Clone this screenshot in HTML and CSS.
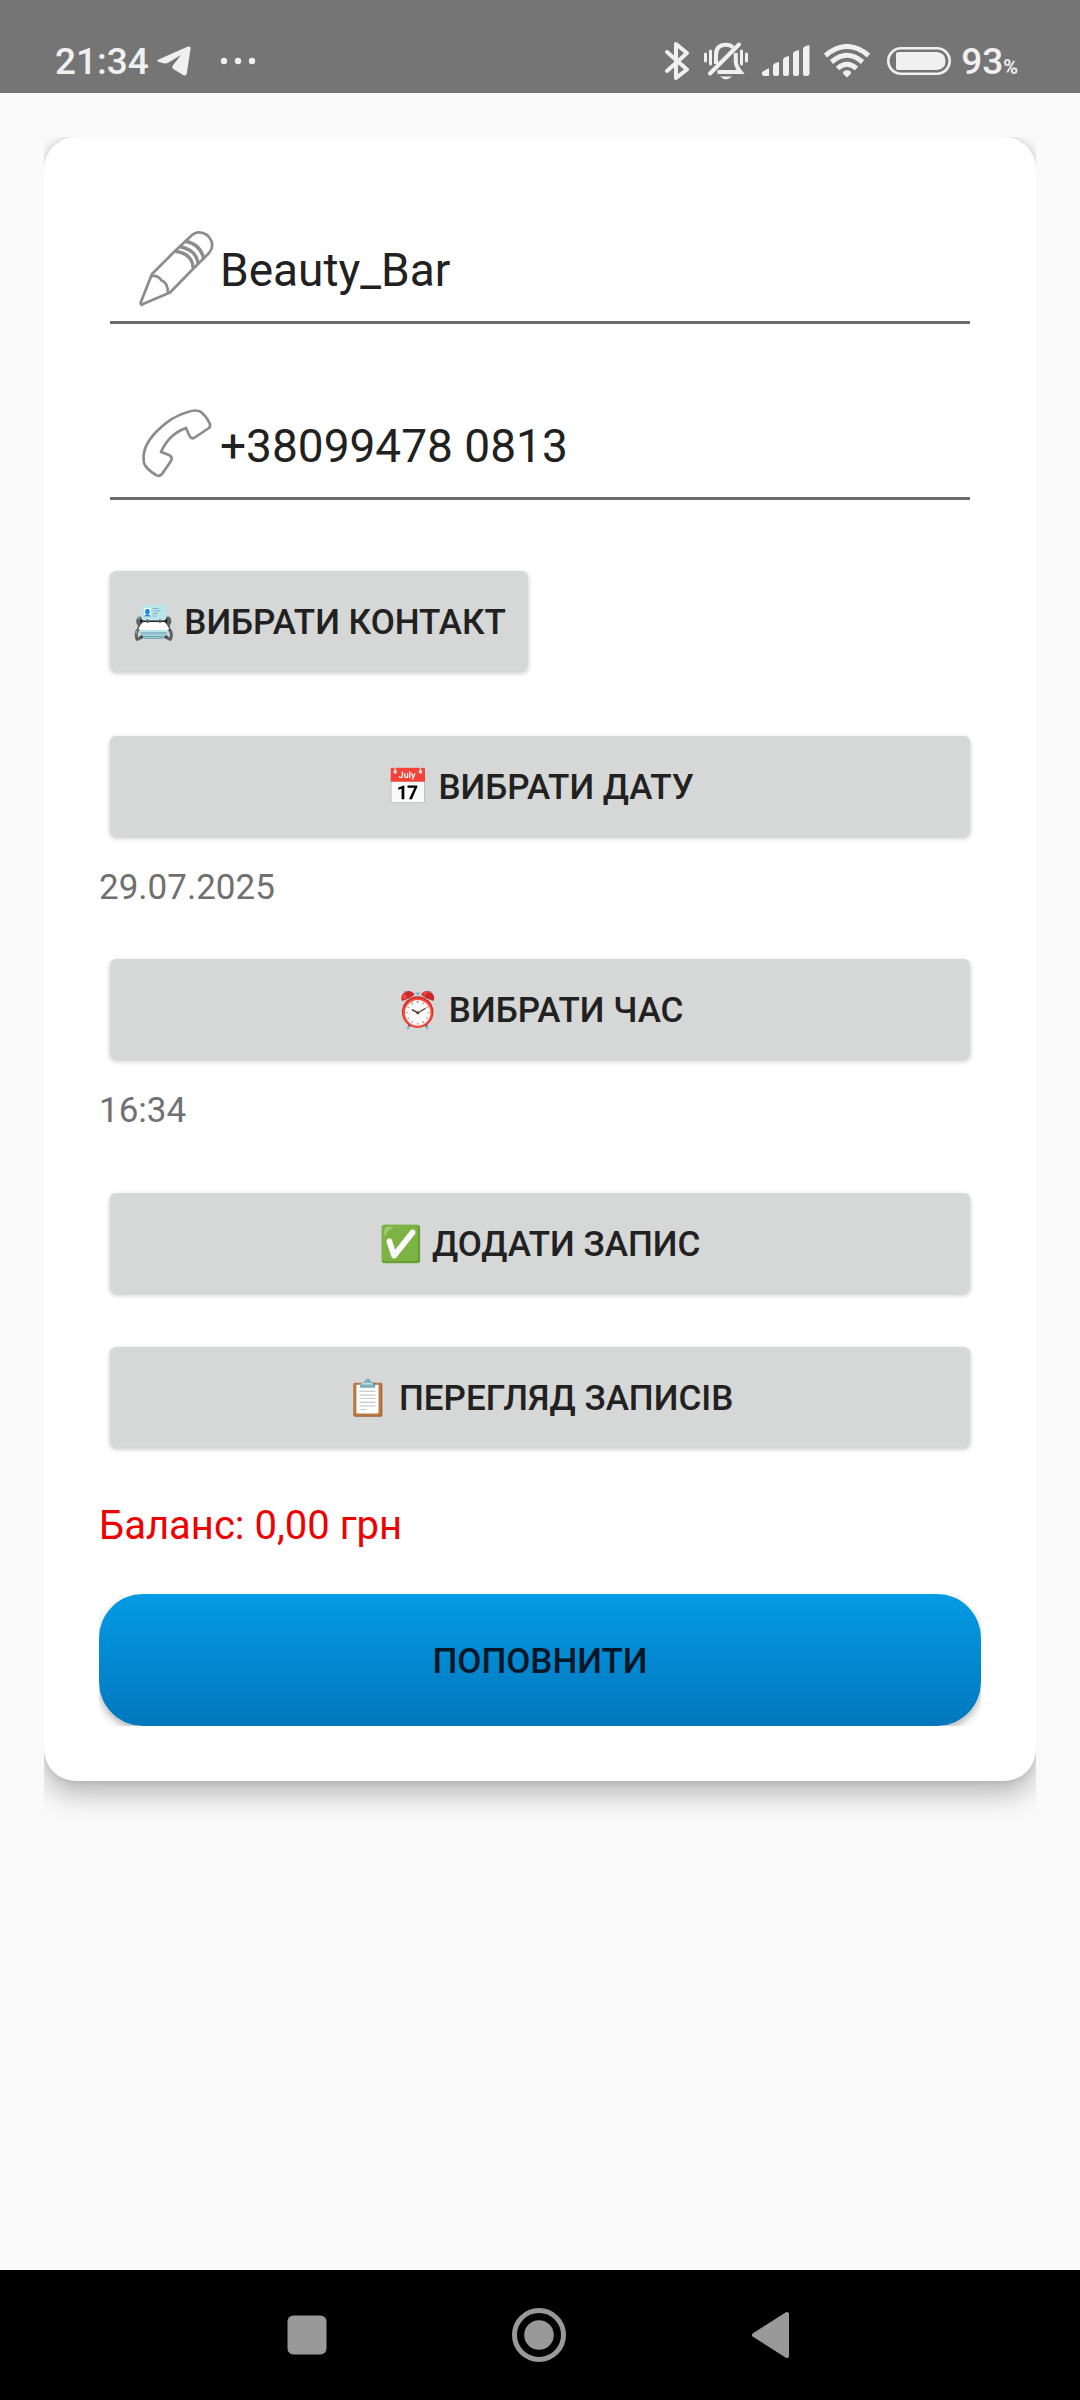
FILE: index.html
```html
<!DOCTYPE html>
<html lang="uk">
<head>
<meta charset="utf-8">
<meta name="viewport" content="width=device-width, initial-scale=1">
<title>Beauty_Bar</title>
<link rel="stylesheet" href="styles.css">
</head>
<body>
<header class="status">
  <div class="status-left">
    <span class="clock">21:34</span>
    <svg class="telegram" width="34" height="30" viewBox="0 0 34 30" aria-hidden="true"><path fill="#f0f0f0" d="M1.500 13.500 L31 .6 Q34 -.3 33.600 2.500 L29.800 27.500 Q29 30.500 26.200 29 L17 23.500 Q14 21.500 16.200 19 L24 9 L11.500 16.500 Q9 18 5.500 17 L1.500 15.700 Q-.8 14.700 1.500 13.500 Z"/></svg>
    <svg width="36" height="8" viewBox="0 0 36 8" fill="#f0f0f0" aria-hidden="true"><circle cx="4" cy="4" r="3.200"/><circle cx="18" cy="4" r="3.200"/><circle cx="32" cy="4" r="3.200"/></svg>
  </div>
  <div class="status-right">
    <svg width="26" height="40" viewBox="0 0 26 40" fill="none" stroke="#f0f0f0" stroke-width="4" stroke-linecap="round" stroke-linejoin="round" aria-hidden="true"><path d="M3 11 L23 28.500 L12 37 V3 L23 12 L3 30"/></svg>
    <svg width="44" height="40" viewBox="0 0 44 40" fill="none" stroke="#f0f0f0" stroke-width="4" aria-hidden="true"><path d="M6 32.500 L35 3.500" stroke-linecap="round"/><path d="M12 23 V14 Q12 3.800 22 3.800 Q26.500 3.800 29 6.500"/><path d="M31.800 12 V21 Q31.800 25 36.500 31 H13.500"/><path d="M1.500 13 V20 M6.500 10 V23 M37.500 10 V23 M42.500 13 V20" stroke-width="3" stroke-linecap="round"/><path d="M16 35.500 H28 Q22 41 16 35.500 Z" fill="#f0f0f0" stroke="none"/></svg>
    <svg width="48" height="32" viewBox="0 0 48 32" fill="#f0f0f0" aria-hidden="true"><path d="M0 27 L7 23 V31 H2 Q0 31 0 29 Z M11 21 Q11 18 17 17 V29 Q17 31 15 31 H13 Q11 31 11 29 Z M21 15 Q21 12 27 11 V29 Q27 31 25 31 H23 Q21 31 21 29 Z M31 9 Q31 6 37 5 V29 Q37 31 35 31 H33 Q31 31 31 29 Z M41 4 Q41 1 47.500 0 V29 Q47 31 45 31 H43 Q41 31 41 29 Z"/></svg>
    <svg width="46" height="34" viewBox="0 0 46 34" fill="none" stroke="#f0f0f0" stroke-width="5" aria-hidden="true"><path d="M1.500 11.500 Q23 -6.500 44.500 11.500"/><path d="M7.500 18 Q23 4.500 38.500 18"/><path d="M13.500 24.500 Q23 16 32.500 24.500"/><path d="M19 29.500 Q18.500 26.500 23 26.200 Q27.500 26.500 27 29.500 L23 33.500 Z" fill="#f0f0f0" stroke="none"/></svg>
    <svg class="battery" width="64" height="28" viewBox="0 0 64 28" aria-hidden="true"><rect x="1.300" y="1.300" width="61.400" height="25.400" rx="12.700" fill="none" stroke="#f0f0f0" stroke-width="2.600"/><path d="M11 5 H50 Q58.500 6 58.500 14 Q58.500 22 50 23 H11 Q9 23 9 21 V7 Q9 5 11 5 Z" fill="#f0f0f0"/></svg>
    <span class="charge">93<small class="percent">%</small></span>
  </div>
</header>

<main class="stage">
  <form class="card">
    <label class="field">
      <svg width="96" height="96" viewBox="0 0 96 96" fill="none" stroke="#8c8c8c" stroke-width="2.700" stroke-linejoin="round" stroke-linecap="round" role="img" aria-label="Ім'я"><path d="M13 82 Q11 84 10.500 81 L22 52 L45.500 28.500 L60 15 Q67.500 7 77 13 L79 15 Q85.500 23 79 31 L63 47 L40 70.500 Z"/><path d="M22 54 Q28 53 31.500 58.500 Q37.500 60 38 71"/><path stroke-width="3.400" d="M46.500 29.500 Q62 32 63 45 M51 25 Q66 28 68 41 M56 19.500 Q70 22 73.500 36"/></svg>
      <input class="input" type="text" value="Beauty_Bar">
    </label>
    <label class="field">
      <svg width="96" height="96" viewBox="0 0 96 96" fill="none" stroke="#8c8c8c" stroke-width="2.700" stroke-linejoin="round" role="img" aria-label="Телефон"><path d="M58 14 Q66 11 71 14 Q76 18 79.500 25 Q81 28 79 30 L64 40 Q61 41 59.500 38 L56 30 Q39 36 31 54 L39 57 Q43 59 41 63 L32 76 Q29 79 26 77 Q16 71 14 65 Q11 49 27 33 Q42 18 58 14 Z"/></svg>
      <input class="input" type="tel" value="+38099478 0813">
    </label>
    <button class="btn btn-contact" type="button">📇 ВИБРАТИ КОНТАКТ</button>
    <button class="btn" type="button">📅 ВИБРАТИ ДАТУ</button>
    <p class="value">29.07.2025</p>
    <button class="btn" type="button">⏰ ВИБРАТИ ЧАС</button>
    <p class="value value-last">16:34</p>
    <button class="btn btn-add" type="submit">✅ ДОДАТИ ЗАПИС</button>
    <button class="btn" type="button">📋 ПЕРЕГЛЯД ЗАПИСІВ</button>
    <p class="balance">Баланс: 0,00 грн</p>
    <div class="topup-clip"><button class="topup" type="button">ПОПОВНИТИ</button></div>
  </form>
</main>

<nav class="navbar">
  <button class="nav-btn" type="button" aria-label="Recent"><svg width="56" height="56" viewBox="0 0 56 56" fill="#999"><rect x="8.500" y="8.500" width="39" height="39" rx="6"/></svg></button>
  <button class="nav-btn" type="button" aria-label="Home"><svg width="56" height="56" viewBox="0 0 56 56"><circle cx="28" cy="28" r="24.500" fill="none" stroke="#999" stroke-width="5"/><circle cx="28" cy="28" r="14.800" fill="#999"/></svg></button>
  <button class="nav-btn" type="button" aria-label="Back"><svg width="56" height="56" viewBox="0 0 56 56" fill="#999" stroke="#999" stroke-width="4" stroke-linejoin="round"><path d="M11 28 L44 7 V49 Z"/></svg></button>
</nav>
</body>
</html>
```
FILE: styles.css
```css
* { box-sizing: border-box; }
body {
  margin: 0;
  min-height: 100vh;
  display: flex;
  flex-direction: column;
  background: #fafafa;
  color: #212121;
  font-family: Roboto, "Noto Color Emoji", sans-serif;
}
button, input { font: inherit; color: inherit; border: 0; }
p { margin: 0; }
svg { display: block; flex: none; }

.status {
  display: flex;
  justify-content: space-between;
  height: 93px;
  padding: 28px 62px 0 55px;
  background: #757575;
  color: #f0f0f0;
  font-size: 37px;
  font-weight: 500;
}
.status-left, .status-right { display: flex; align-items: center; height: 66px; }
.telegram { margin: 0 29px 0 8px; }
.status-right { gap: 14px; }
.battery { margin: 0 -4px 0 3px; }
.percent { font-size: 20px; font-weight: 700; }

.stage {
  flex: 1;
  margin: 44px 44px 0;
  overflow: hidden;
}
.card {
  display: flex;
  flex-direction: column;
  padding: 55px;
  border-radius: 32px;
  background: #fff;
  box-shadow: 0 14px 28px rgba(0, 0, 0, .26), 0 0 10px rgba(0, 0, 0, .12);
}
.field {
  display: flex;
  align-items: center;
  height: 132px;
  margin: 0 11px 44px;
  padding: 27px 0 0 20px;
  border-bottom: 3px solid #6b6b6b;
}
.input {
  flex: 1;
  min-width: 0;
  height: 60px;
  margin-left: -6px;
  padding: 0;
  background: none;
  outline: 0;
  font-size: 46px;
}
.btn {
  height: 100px;
  margin: 0 11px;
  padding: 2px 22px 0;
  border-radius: 6px;
  background: #d6d7d7;
  box-shadow: 0 2px 5px rgba(0, 0, 0, .24);
  font-size: 35px;
  font-weight: 500;
}
.btn-contact { align-self: flex-start; margin: 27px 11px 65px; }
.btn-add { margin-bottom: 54px; }
.value {
  margin: 30px 0 49px;
  color: #707070;
  font-size: 35px;
  line-height: 44px;
}
.value-last { margin-bottom: 60px; }
.balance {
  margin: 51px 0 40px;
  color: #f00000;
  font-size: 40px;
  line-height: 56px;
}
.topup-clip { overflow: hidden; }
.topup {
  display: block;
  width: 100%;
  height: 132px;
  padding: 2px 22px 0;
  border-radius: 44px;
  background: linear-gradient(#039be5, #0277bd);
  box-shadow: 0 4px 8px rgba(0, 0, 0, .3);
  color: #051726;
  font-size: 35px;
  font-weight: 500;
}

.navbar {
  display: flex;
  justify-content: center;
  align-items: center;
  gap: 176px;
  height: 130px;
  padding-right: 2px;
  background: #000;
}
.nav-btn { padding: 0; background: none; }
```
